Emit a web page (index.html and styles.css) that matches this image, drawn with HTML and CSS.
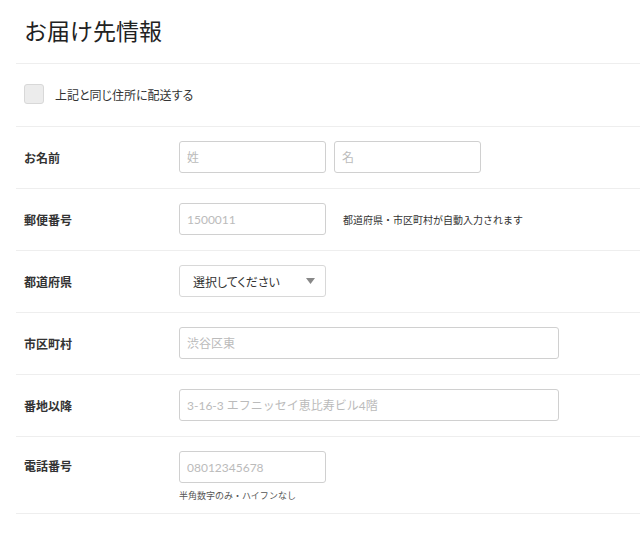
FILE: index.html
```html
<!DOCTYPE html>
<html lang="ja">
<head>
<meta charset="utf-8">
<link rel="stylesheet" href="styles.css">
</head>
<body>
<section class="form">
  <h1 class="title">お届け先情報</h1>
  <div class="row row-check">
    <span class="checkbox"></span>
    <span class="check-label">上記と同じ住所に配送する</span>
  </div>
  <div class="row">
    <div class="label">お名前</div>
    <div class="field">
      <input class="input narrow" placeholder="姓">
      <input class="input narrow" placeholder="名">
    </div>
  </div>
  <div class="row">
    <div class="label">郵便番号</div>
    <div class="field">
      <input class="input narrow" placeholder="1500011">
      <span class="hint">都道府県・市区町村が自動入力されます</span>
    </div>
  </div>
  <div class="row">
    <div class="label">都道府県</div>
    <div class="field">
      <div class="select">
        <span>選択してください</span>
        <svg class="arrow" width="9" height="6" viewBox="0 0 9 6"><path d="M0 0H9L4.5 6Z" fill="#888"/></svg>
      </div>
    </div>
  </div>
  <div class="row">
    <div class="label">市区町村</div>
    <div class="field">
      <input class="input wide" placeholder="渋谷区東">
    </div>
  </div>
  <div class="row">
    <div class="label">番地以降</div>
    <div class="field">
      <input class="input wide" placeholder="3-16-3 エフニッセイ恵比寿ビル4階">
    </div>
  </div>
  <div class="row row-phone">
    <div class="label">電話番号</div>
    <div class="field column">
      <input class="input narrow" placeholder="08012345678">
      <span class="note">半角数字のみ・ハイフンなし</span>
    </div>
  </div>
  <div class="end"></div>
</section>
</body>
</html>
```
FILE: styles.css
```css
* { box-sizing: border-box; }
html, body {
  margin: 0;
  background: #fff;
}
body {
  font-family: "Lato", "Noto Sans CJK JP", sans-serif;
  color: #333;
}
.form {
  margin-left: 16px;
}
.title {
  margin: 0;
  padding-left: 8px;
  height: 63px;
  line-height: 62px;
  font-size: 23px;
  font-weight: normal;
  color: #222;
}
.row {
  border-top: 1px solid #eee;
  display: flex;
  align-items: center;
  padding: 14px 0 15px 8px;
}
.row-check {
  padding: 20px 0 22px 8px;
}
.checkbox {
  width: 20px;
  height: 20px;
  background: #ececec;
  border: 1px solid #d8d8d8;
  border-radius: 3px;
}
.check-label {
  margin-left: 11px;
  font-size: 12px;
  color: #333;
  font-feature-settings: "palt";
}
.label {
  width: 155px;
  font-size: 12px;
  font-weight: bold;
  color: #333;
}
.field {
  display: flex;
  align-items: center;
  gap: 8px;
}
.field.column {
  flex-direction: column;
  align-items: flex-start;
  gap: 6px;
}
.input {
  height: 32px;
  border: 1px solid #d0d0d0;
  border-radius: 3px;
  padding: 0 7px;
  font-family: inherit;
  font-size: 12px;
  color: #333;
  background: #fff;
  outline: none;
  margin: 0;
}
.input::placeholder {
  color: #bbb;
}
.narrow { width: 147px; }
.wide { width: 380px; }
.hint {
  margin-left: 9px;
  font-size: 10px;
  color: #333;
}
.select {
  width: 147px;
  height: 32px;
  border: 1px solid #d8d8d8;
  border-radius: 3px;
  display: flex;
  align-items: center;
  justify-content: space-between;
  padding: 0 10px 0 13px;
  font-size: 12px;
  color: #333;
  font-feature-settings: "palt";
}
.arrow { display: block; }
.row-phone {
  padding: 14px 0 10px 8px;
  align-items: flex-start;
}
.row-phone .label {
  line-height: 32px;
}
.note {
  font-size: 9px;
  line-height: 14px;
  color: #555;
}
.end {
  border-top: 1px solid #eee;
}
```
